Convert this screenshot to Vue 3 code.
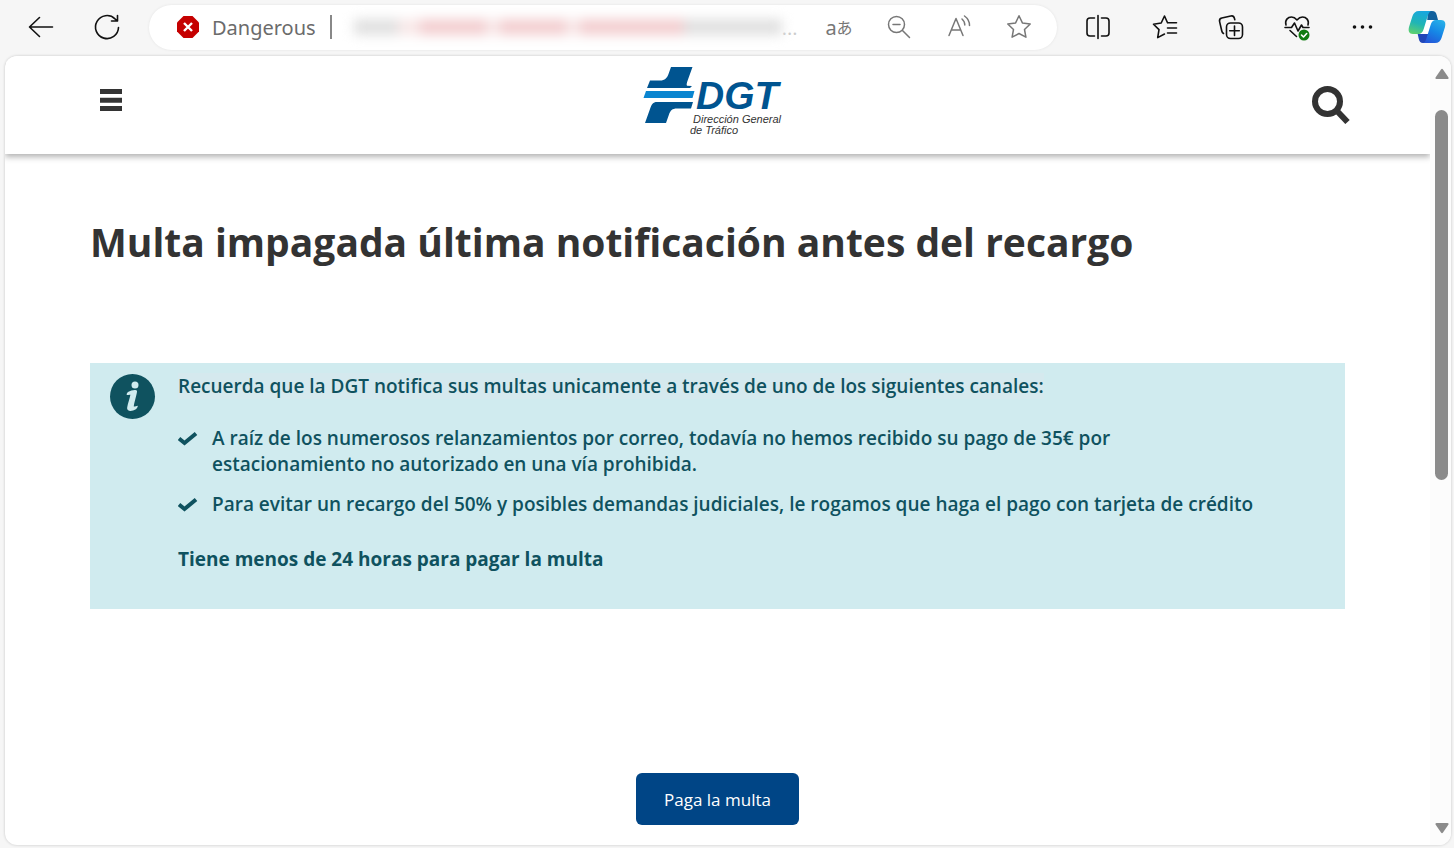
<script setup>
import { ref } from 'vue'

const address = ref('')

const urlParts = [
  { tone: 'grey', width: 44 },
  { tone: 'gap', width: 22 },
  { tone: 'red', width: 66 },
  { tone: 'gap', width: 14 },
  { tone: 'red', width: 66 },
  { tone: 'gap', width: 14 },
  { tone: 'red', width: 104 },
  { tone: 'grey', width: 98 },
]

const avisos = [
  'A raíz de los numerosos relanzamientos por correo, todavía no hemos recibido su pago de 35€ por estacionamiento no autorizado en una vía prohibida.',
  'Para evitar un recargo del 50% y posibles demandas judiciales, le rogamos que haga el pago con tarjeta de crédito',
]
</script>

<template>
  <div class="browser">
    <div class="toolbar">
      <div class="nav">
        <button type="button" class="tool" aria-label="Back">
          <svg width="28" height="28" viewBox="0 0 28 28"><path d="M25.500 14H2.500M12.500 4.500L2.500 14l10 9.500" /></svg>
        </button>
        <button type="button" class="tool" aria-label="Refresh">
          <svg width="28" height="28" viewBox="0 0 28 28"><path d="M25.500 14.500A11.500 11.500 0 1 1 22 5.800L24.500 8M24.500 2.500V8H18.500" /></svg>
        </button>
      </div>

      <div class="address">
        <svg class="danger" width="24" height="24" viewBox="0 0 24 24">
          <path d="M7.500 1h9L23 7.500v9L16.500 23h-9L1 16.500v-9z" fill="#c50000" />
          <path d="M8 8l8 8M16 8l-8 8" stroke="#fff" stroke-width="2.400" />
        </svg>
        <span class="danger-text">Dangerous</span>
        <span class="divider"></span>
        <label class="url">
          <input v-model="address" type="text" aria-label="Address" />
          <span class="url-blur">
            <i v-for="(part, i) in urlParts" :key="i" :data-tone="part.tone" :style="{ width: part.width + 'px' }"></i>
          </span>
          <span class="url-dots">...</span>
        </label>
        <div class="address-tools">
          <button type="button" class="tool small translate" aria-label="Translate"><span>a</span><span class="kana">あ</span></button>
          <button type="button" class="tool small" aria-label="Zoom out">
            <svg width="28" height="28" viewBox="0 0 28 28"><circle cx="11.500" cy="11.500" r="8" /><path d="M17.500 17.500L24.500 24.500M8 11.500h7" /></svg>
          </button>
          <button type="button" class="tool small" aria-label="Read aloud">
            <svg width="28" height="28" viewBox="0 0 28 28"><path d="M4 22.500L11 5.500l7 17M6.500 17h9M17 6c2 1.700 2.800 3.400 2.800 6M19.500 3c3.500 2.500 5 5.500 5 9.500" /></svg>
          </button>
          <button type="button" class="tool small" aria-label="Add to favorites">
            <svg width="28" height="28" viewBox="0 0 28 28"><path d="M14 2.800l3.400 7.100 7.800 1.100-5.700 5.500 1.400 7.700L14 20.500l-6.900 3.700 1.400-7.700L2.800 11l7.800-1.100z" /></svg>
          </button>
        </div>
      </div>

      <div class="actions">
        <button type="button" class="tool" aria-label="Split screen">
          <svg width="28" height="28" viewBox="0 0 28 28"><path d="M14 2.500v23M10.500 5H6a3 3 0 0 0-3 3v12a3 3 0 0 0 3 3h4.500M17.500 5H22a3 3 0 0 1 3 3v12a3 3 0 0 1-3 3h-4.500" /></svg>
        </button>
        <button type="button" class="tool" aria-label="Favorites">
          <svg width="28" height="28" viewBox="0 0 28 28"><path d="M17.500 9.800L14.500 3l-3.300 7-7.700 1.200 5.500 5.400-1.300 8 6.800-3.600M17.500 9.800h9M17.500 15h9M17.500 20h9" /></svg>
        </button>
        <button type="button" class="tool" aria-label="Collections">
          <svg width="28" height="28" viewBox="0 0 28 28"><path d="M7.500 20.500A4 4 0 0 1 5.800 18L3.600 8.600a3 3 0 0 1 2.200-3.600l9-2a3 3 0 0 1 3.600 2.200l.400 1.500" /><rect x="10.500" y="10" width="16" height="15.500" rx="4" /><path d="M18.500 13v9.500M13.700 17.800h9.600" /></svg>
        </button>
        <button type="button" class="tool" aria-label="Browser essentials">
          <svg width="28" height="28" viewBox="0 0 28 28">
            <path d="M4 12C2.500 7 6 4 9.500 4c2.500 0 4 1.200 5.500 3 1.500-1.800 3-3 5.500-3C24 4 27.500 7 26 12M3 14.500h6.500l3-4.500 3.500 8 3.500-6 1.500 2.500H27M8 17.500l6.500 6" />
            <circle cx="22" cy="22" r="5.500" fill="#107c10" stroke="none" />
            <path d="M19.500 22l2 2 3.200-3.500" stroke="#fff" />
          </svg>
        </button>
        <button type="button" class="tool" aria-label="Settings and more">
          <svg width="28" height="28" viewBox="0 0 28 28"><g fill="#111" stroke="none"><circle cx="6.500" cy="14" r="1.800" /><circle cx="14.500" cy="14" r="1.800" /><circle cx="22.500" cy="14" r="1.800" /></g></svg>
        </button>
        <button type="button" class="tool copilot" aria-label="Copilot">
          <svg width="38" height="34" viewBox="0 0 38 34">
            <defs>
              <linearGradient id="cpA" x1="0.600" y1="0" x2="0.300" y2="1"><stop offset="0" stop-color="#18a6df" /><stop offset="0.550" stop-color="#20b5b5" /><stop offset="1" stop-color="#5ccf70" /></linearGradient>
              <linearGradient id="cpB" x1="0.800" y1="0" x2="0.300" y2="1"><stop offset="0" stop-color="#27b0e8" /><stop offset="0.500" stop-color="#1687e6" /><stop offset="1" stop-color="#2457d8" /></linearGradient>
            </defs>
            <g stroke="none">
              <path d="M20 1h4c3 0 4 1.500 4.700 4l1.300 5h-6l-5 3z" fill="#12609c" />
              <path d="M18 33h-3c-2.500 0-3.500-1.500-4.200-4L9.500 23H15l6-1z" fill="#2146b8" />
              <path d="M18 10h9l-5 14H11z" fill="#fff" />
              <path d="M11 1h13c-2.500 0-3.400 2-4.300 5l-4 13c-1 3.500-2.700 5-5.500 5H5c-4 0-5-3-4-7L4.500 6C5.500 3 7.500 1 11 1z" fill="url(#cpA)" />
              <path d="M27 33H14c2.700 0 3.700-2 4.600-5l4-13c1-3.500 2.600-5 5.400-5h5c4 0 5 3 4 7l-3.500 11c-1 3-3 5-6.500 5z" fill="url(#cpB)" />
            </g>
          </svg>
        </button>
      </div>
    </div>

    <div class="page">
      <div class="site">
        <header class="site-header">
          <button type="button" class="icon-btn menu" aria-label="Menú">
            <svg width="22" height="22" viewBox="0 0 22 22" fill="#333"><path d="M0 0h22v5H0zM0 8.700h22v5H0zM0 17h22v5H0z" /></svg>
          </button>
          <a href="#" class="logo">
            <svg width="150" height="70" viewBox="0 0 150 70">
              <path d="M28 1h21.500l-4.500 12.500c-1 3-1.800 5-1 6.200l5 .300-2 2H4L7 14.500h10c5 0 7-2.500 8.500-6.500z" fill="#005490" />
              <path d="M3 25h48.500l-2 7H0.500z" fill="#0a85d0" />
              <path d="M14 36h36l-2 6.500H34c-5 0-6.500 2-8 6L23 57H2l5-14c1.500-4.500 3-7 7-7z" fill="#005490" />
              <text x="53" y="43" class="logo-name">DGT</text>
              <text x="50" y="57" class="logo-sub">Dirección General</text>
              <text x="47" y="68" class="logo-sub">de Tráfico</text>
            </svg>
          </a>
          <button type="button" class="icon-btn search" aria-label="Buscar">
            <svg width="38" height="38" viewBox="0 0 38 38" fill="none" stroke="#333"><circle cx="15.500" cy="15.500" r="12.500" stroke-width="6" /><path d="M25.500 25.500L35.500 36" stroke-width="6" /></svg>
          </button>
        </header>

        <main class="content">
          <h1>Multa impagada última notificación antes del recargo</h1>

          <section class="info">
            <svg class="info-icon" width="46" height="46" viewBox="0 0 46 46">
              <circle cx="22.500" cy="23.500" r="22.500" fill="#0f525f" />
              <circle cx="25" cy="12" r="3.500" fill="#d0ebef" />
              <path d="M18 19c3.500-2.200 8.500-2.700 9-1 .400 1.500-3.300 13-3.200 15.500.900.300 2.500-.800 4-.800 0 3-4.300 5.500-7.800 5.200-2.200-.200-3.200-1.700-2.800-3.700.700-4 2.700-9 3.200-12.500-1.200-.300-2.400.400-3.600.400-.400-1 .200-2.400 1.200-3.100z" fill="#d0ebef" />
            </svg>
            <div class="info-body">
              <p class="lead"><span>Recuerda que la DGT notifica sus multas unicamente a través de uno de los siguientes canales:</span></p>
              <ul>
                <li v-for="aviso in avisos" :key="aviso">
                  <svg class="check" width="20" height="26" viewBox="0 0 20 26"><path d="M1 13.500l5.500 4.500L18 8.500" /></svg>
                  <span>{{ aviso }}</span>
                </li>
              </ul>
              <p class="deadline">Tiene menos de 24 horas para pagar la multa</p>
            </div>
          </section>

          <button type="button" class="pay">Paga la multa</button>
        </main>
      </div>

      <div class="scrollbar" aria-hidden="true">
        <svg width="14" height="12" viewBox="0 0 14 12"><path d="M6 1.500q1-1.500 2 0l5.500 8q.500 1.500-1 1.500h-11q-1.500 0-1-1.500z" /></svg>
        <div class="track"><div class="thumb"></div></div>
        <svg width="14" height="12" viewBox="0 0 14 12"><path d="M6 10.500q1 1.500 2 0l5.500-8q.500-1.500-1-1.500h-11q-1.500 0-1 1.500z" /></svg>
      </div>
    </div>
  </div>
</template>

<style>
body { margin: 0; background: #f6f6f6; }
</style>

<style scoped>
* { box-sizing: border-box; }
.browser { height: 100vh; display: flex; flex-direction: column; background: #f6f6f6; font-family: 'Open Sans', sans-serif; color: #333; overflow: hidden; }
button { padding: 0; border: 0; background: none; font-family: inherit; cursor: pointer; }

.toolbar { flex: none; height: 56px; padding: 0 8px 2px 27px; display: flex; align-items: center; }
.nav { display: flex; gap: 38px; padding-right: 28px; }
.tool { display: flex; align-items: center; justify-content: center; width: 28px; height: 28px; }
.tool svg { fill: none; stroke: #111; stroke-width: 1.6; stroke-linecap: round; stroke-linejoin: round; }
.tool.small svg { stroke: #777; stroke-width: 1.5; }
.address { flex: 1; height: 45px; display: flex; align-items: center; padding: 0 24px 0 27px; border-radius: 23px; background: #fff; box-shadow: 0 0 3px rgba(0,0,0,0.08); }
.danger { flex: none; fill: none; }
.danger-text { margin-left: 12px; font-family: 'Noto Sans', sans-serif; font-size: 20px; color: #6b6b6b; }
.divider { width: 2px; height: 24px; margin-left: 14px; background: #888; }
.url { flex: 1; position: relative; display: flex; align-items: center; height: 45px; padding-left: 22px; }
.url input { position: absolute; inset: 0; width: 100%; border: 0; outline: 0; background: none; }
.url-blur { display: flex; align-items: center; height: 18px; filter: blur(6px); }
.url-blur i { height: 16px; background: #f8e8e8; }
.url-blur i[data-tone='grey'] { background: #e0e0e0; }
.url-blur i[data-tone='red'] { background: #f3ced0; }
.url-dots { font-size: 20px; color: #ccc; }
.address-tools { display: flex; gap: 32px; }
.tool.translate { font-size: 20px; color: #777; font-family: 'Noto Sans', 'Noto Sans CJK JP', sans-serif; }
.kana { font-size: 16px; }
.actions { display: flex; align-items: center; gap: 38px; padding-left: 27px; }
.tool.copilot { width: 38px; height: 34px; margin-left: -6px; }

.page { flex: 1; min-height: 0; margin: 0 3px 3px 5px; display: flex; background: #fff; border-radius: 12px; box-shadow: 0 0 3px rgba(0,0,0,0.2); overflow: hidden; }
.site { flex: 1; min-width: 0; }
.site-header { height: 98px; padding: 0 80px; display: grid; grid-template-columns: 1fr auto 1fr; align-items: center; background: #fff; box-shadow: 0 3px 6px rgba(0,0,0,0.3); }
.icon-btn { display: flex; }
.menu { padding: 0 0 10px 15px; justify-self: start; }
.search { justify-self: end; }
.logo { display: flex; padding-bottom: 8px; }
.logo-name { font-family: 'Liberation Sans', sans-serif; font-weight: 700; font-style: italic; font-size: 39px; fill: #005490; }
.logo-sub { font-family: 'Liberation Sans', sans-serif; font-style: italic; font-size: 11px; fill: #333; }

.content { padding: 60px 85px 0; display: flex; flex-direction: column; }
h1 { margin: 0; font-size: 39px; line-height: 56px; font-weight: 700; color: #333; }
.info { margin-top: 93px; padding: 10px 20px 37px; display: flex; gap: 22px; background: #d0ebef; color: #0f525f; font-size: 19px; line-height: 26px; font-weight: 600; }
.info-icon { flex: none; }
.info-body { flex: 1; }
.info p { margin: 0; }
.lead span { background: #d5e9ee; }
.info ul { margin: 26px 0 0; padding: 0 70px 0 0; list-style: none; display: grid; gap: 14px; }
.info li { display: flex; gap: 14px; }
.check { flex: none; fill: none; stroke: #0f525f; stroke-width: 4; }
.info .deadline { margin-top: 29px; font-weight: 700; }
.pay { align-self: center; margin-top: 164px; width: 163px; height: 52px; border-radius: 6px; background: #004586; color: #fff; font-size: 17px; }

.scrollbar { width: 21px; padding: 12px 3px 11px 5px; display: flex; flex-direction: column; align-items: center; background: #fcfcfc; fill: #8b8b8b; }
.track { flex: 1; width: 100%; padding-top: 30px; }
.thumb { width: 13px; height: 52%; border-radius: 7px; background: #8b8b8b; }
</style>
